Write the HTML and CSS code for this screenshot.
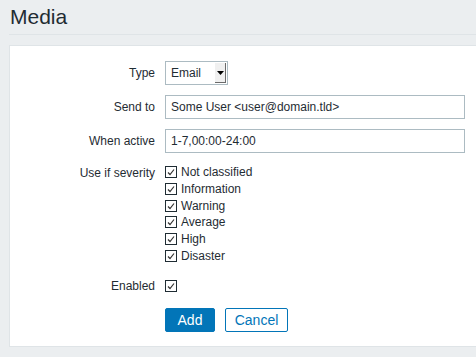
FILE: index.html
```html
<!DOCTYPE html>
<html lang="en">
<head>
    <meta charset="UTF-8">
    <title>Media</title>
    <link rel="stylesheet" href="styles.css">
</head>
<body>
    <div class="wrapper">
        <header class="header-title">
            <h1>Media</h1>
        </header>

        <main class="panel">
            <form class="form-list">
                <div class="form-row">
                    <label class="form-label">Type</label>
                    <div class="form-field">
                        <div class="select">
                            <span class="select-value">Email</span>
                            <span class="select-arrow">
                                <svg width="7" height="4" viewBox="0 0 7 4"><path d="M0 0h7L3.5 4z" fill="#000"/></svg>
                            </span>
                        </div>
                    </div>
                </div>

                <div class="form-row">
                    <label class="form-label">Send to</label>
                    <div class="form-field">
                        <input class="text-input" type="text" value="Some User &lt;user@domain.tld&gt;">
                    </div>
                </div>

                <div class="form-row">
                    <label class="form-label">When active</label>
                    <div class="form-field">
                        <input class="text-input" type="text" value="1-7,00:00-24:00">
                    </div>
                </div>

                <div class="form-row top">
                    <label class="form-label">Use if severity</label>
                    <ul class="checkbox-list">
                        <li><span class="checkbox"></span>Not classified</li>
                        <li><span class="checkbox"></span>Information</li>
                        <li><span class="checkbox"></span>Warning</li>
                        <li><span class="checkbox"></span>Average</li>
                        <li><span class="checkbox"></span>High</li>
                        <li><span class="checkbox"></span>Disaster</li>
                    </ul>
                </div>

                <div class="form-row enabled">
                    <label class="form-label">Enabled</label>
                    <div class="form-field">
                        <span class="checkbox"></span>
                    </div>
                </div>

                <div class="form-row buttons">
                    <span></span>
                    <div class="form-field">
                        <button type="button" class="btn btn-primary">Add</button>
                        <button type="button" class="btn btn-alt">Cancel</button>
                    </div>
                </div>
            </form>
        </main>
    </div>
</body>
</html>
```

FILE: styles.css
```css
* {
    margin: 0;
    padding: 0;
    box-sizing: border-box;
}

body {
    font-family: 'Liberation Sans', Arial, sans-serif;
    font-size: 12px;
    color: #1f2c33;
    background-color: #ebeef0;
    overflow: hidden;
}

.wrapper {
    padding-left: 9px;
    margin-right: -10px;
}

.header-title {
    height: 35px;
    border-bottom: 1px solid #dfe4e7;
}

.header-title h1 {
    font-size: 21px;
    font-weight: normal;
    line-height: 24px;
    padding-top: 5px;
    padding-left: 1px;
    color: #1f2c33;
}

.panel {
    margin-top: 10px;
    background-color: #ffffff;
    border: 1px solid #dfe4e7;
    padding: 10px 0 10px 0;
    height: 302px;
}

.form-row {
    display: grid;
    grid-template-columns: 145px 1fr;
    column-gap: 10px;
    align-items: center;
    padding: 5px 0;
}

.form-row.top {
    align-items: start;
    padding-top: 6px;
}

.form-row.top .form-label {
    padding-top: 2px;
}

.form-row.enabled {
    padding: 10px 0 8px;
}

.form-row.buttons {
    padding-top: 7px;
}

.form-label {
    text-align: right;
    line-height: 14px;
}

.form-field {
    display: flex;
    align-items: center;
    gap: 10px;
}

.select {
    width: 63px;
    height: 24px;
    border: 1px solid #acbbc2;
    display: flex;
    align-items: center;
    justify-content: space-between;
    padding-left: 5px;
    background-color: #ffffff;
}

.select-value {
    line-height: 14px;
}

.select-arrow {
    width: 11px;
    height: 20px;
    margin-right: 1px;
    background-color: #f0f0f0;
    border-right: 1px solid #6b6b6b;
    border-bottom: 1px solid #6b6b6b;
    display: flex;
    align-items: center;
    justify-content: center;
}

.text-input {
    width: 300px;
    height: 24px;
    border: 1px solid #acbbc2;
    padding: 0 5px;
    font-family: inherit;
    font-size: 12px;
    color: #1f2c33;
    background-color: #ffffff;
    outline: none;
}

.checkbox-list {
    list-style: none;
}

.checkbox-list li {
    display: flex;
    align-items: center;
    height: 16.7px;
}

.checkbox {
    display: inline-block;
    width: 12px;
    height: 12px;
    border: 1px solid #1f2c33;
    margin-right: 4px;
    background: #ffffff url("data:image/svg+xml,%3Csvg xmlns='http://www.w3.org/2000/svg' width='10' height='10' viewBox='0 0 10 10'%3E%3Cpath d='M2 5.5 L4 7.5 L8 2.5' fill='none' stroke='%23333' stroke-width='1.2'/%3E%3C/svg%3E") no-repeat center;
}

.btn {
    height: 24px;
    border-radius: 2px;
    font-family: inherit;
    font-size: 14px;
    cursor: pointer;
}

.btn-primary {
    width: 50px;
    background-color: #0275b8;
    border: 1px solid #0275b8;
    color: #ffffff;
}

.btn-alt {
    width: 63px;
    background-color: #ffffff;
    border: 1px solid #0275b8;
    color: #0275b8;
}
```
